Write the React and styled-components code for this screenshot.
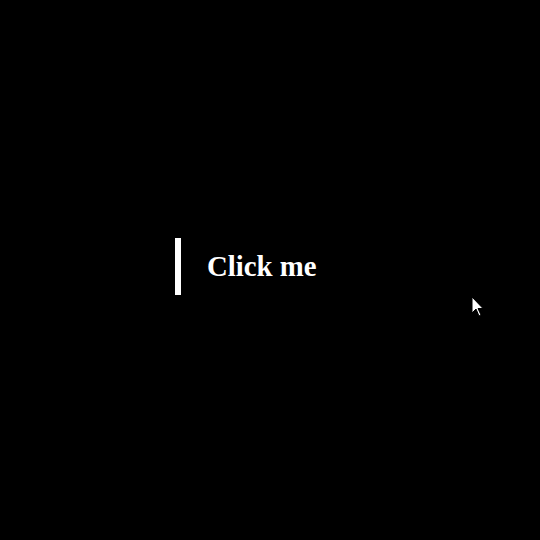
import React from 'react'
import styled, { createGlobalStyle } from 'styled-components'

const GlobalStyle = createGlobalStyle`
  html, body {
    margin: 0;
    background: #000;
  }
`

const Stage = styled.main`
  position: relative;
  width: 540px;
  height: 540px;
  background: #000;
  box-sizing: border-box;
  padding: 238px 0 0 175px;
  display: flex;
  align-items: flex-start;
`

const ClickButton = styled.button`
  display: flex;
  align-items: center;
  height: 57px;
  margin: 0;
  padding: 0 26px;
  border: none;
  border-left: 6px solid #fff;
  background: transparent;
  color: #fff;
  font-family: "Liberation Serif", "Times New Roman", serif;
  font-weight: bold;
  font-size: 28.8px;
  cursor: pointer;
`

const Pointer = styled.svg`
  position: absolute;
  left: 471px;
  top: 296px;
  pointer-events: none;
`

export default function App () {
  return (
    <Stage>
      <GlobalStyle />
      <ClickButton>Click me</ClickButton>
      <Pointer width="13" height="21" viewBox="0 0 13 21">
        <path
          d="M1 1 L1 17 L5 13 L8 20 L10 19 L7 12.5 L12 12.5 Z"
          fill="#fff"
          stroke="#000"
          strokeWidth="1"
        />
      </Pointer>
    </Stage>
  )
}
